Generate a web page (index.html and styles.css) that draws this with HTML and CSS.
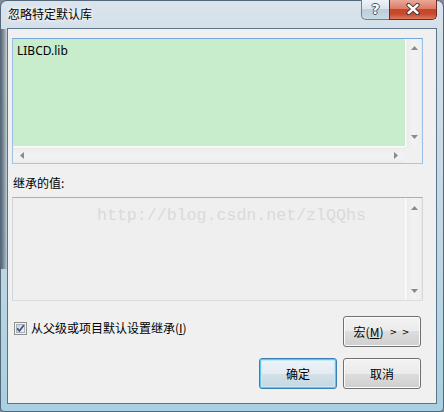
FILE: index.html
```html
<!DOCTYPE html>
<html lang="zh-CN">
<head>
<meta charset="utf-8">
<title>忽略特定默认库</title>
<link rel="stylesheet" href="styles.css">
</head>
<body>
<div class="window">
  <div class="titlebar">
    <span class="title">忽略特定默认库</span>
    <div class="caption-btns">
      <div class="cap-help">?</div>
      <div class="cap-close">
        <svg width="14" height="12" viewBox="0 0 14 12">
          <path d="M2.5 2 L11.5 10 M11.5 2 L2.5 10" stroke="#3a2a2a" stroke-width="4.2" stroke-linecap="round"/>
          <path d="M2.5 2 L11.5 10 M11.5 2 L2.5 10" stroke="#ffffff" stroke-width="2.4" stroke-linecap="round"/>
        </svg>
      </div>
    </div>
  </div>
  <div class="client">
    <div class="listbox focused">
      <div class="lb-content green">LIBCD.lib</div>
      <div class="vscroll">
        <svg class="arr" width="7" height="4" viewBox="0 0 7 4"><path d="M3.5 0 L7 4 L0 4Z"/></svg>
        <svg class="arr" width="7" height="4" viewBox="0 0 7 4"><path d="M0 0 L7 0 L3.5 4Z"/></svg>
      </div>
      <div class="hscroll">
        <svg class="arr" width="4" height="7" viewBox="0 0 4 7"><path d="M0 3.5 L4 0 L4 7Z"/></svg>
        <svg class="arr" width="4" height="7" viewBox="0 0 4 7"><path d="M0 0 L4 3.5 L0 7Z"/></svg>
      </div>
      <div class="corner"></div>
    </div>
    <div class="label">继承的值:</div>
    <div class="listbox disabled">
      <div class="lb-content"><span class="watermark">http://blog.csdn.net/zlQQhs</span></div>
      <div class="vscroll v2">
        <svg class="arr" width="7" height="4" viewBox="0 0 7 4"><path d="M3.5 0 L7 4 L0 4Z"/></svg>
        <svg class="arr" width="7" height="4" viewBox="0 0 7 4"><path d="M0 0 L7 0 L3.5 4Z"/></svg>
      </div>
    </div>
    <div class="row1">
      <label class="check">
        <svg width="13" height="13" viewBox="0 0 13 13">
          <defs>
            <linearGradient id="cg" x1="0" y1="0" x2="1" y2="1">
              <stop offset="0" stop-color="#c9ced6"/>
              <stop offset="1" stop-color="#f4f5f7"/>
            </linearGradient>
          </defs>
          <rect x="0.5" y="0.5" width="12" height="12" fill="#f4f4f4" stroke="#8e8f8f"/>
          <rect x="2.5" y="2.5" width="8" height="8" fill="url(#cg)" stroke="#a9afb7"/>
          <path d="M3.2 6.4 L5.4 9 L9.8 3.2" fill="none" stroke="#3a4f8c" stroke-width="1.7"/>
        </svg>
        <span>从父级或项目默认设置继承(<u>I</u>)</span>
      </label>
      <button class="btn">宏(<u>M</u>)<span class="chev">&gt; &gt;</span></button>
    </div>
    <div class="row2">
      <button class="btn default">确定</button>
      <button class="btn">取消</button>
    </div>
  </div>
</div>
</body>
</html>
```
FILE: styles.css
```css
* { box-sizing: border-box; }
html, body { margin: 0; padding: 0; }
body {
  width: 444px;
  height: 412px;
  overflow: hidden;
  background: #7f8b96;
  font-family: "Noto Sans", "Noto Sans CJK SC", sans-serif;
  font-size: 12px;
  color: #000;
}
.window {
  width: 444px;
  height: 412px;
  display: flex;
  flex-direction: column;
  border: 1px solid #53687a;
  border-radius: 7px 7px 4px 4px;
  background:
    linear-gradient(90deg, rgba(55,65,75,0.75) 0, rgba(55,65,75,0.45) 3px, rgba(55,65,75,0.08) 6px) 0 28px / 6px 240px no-repeat,
    linear-gradient(180deg, #dbe4ec 0, #d4dfe8 30px, #c4d8e4 220px, #a8d0e0 100%);
}
.titlebar {
  height: 27px;
  display: flex;
  align-items: flex-start;
  padding-left: 7px;
}
.title {
  margin-top: 5px;
  line-height: 16px;
  font-family: "Noto Sans CJK SC", sans-serif;
  text-shadow: 0 0 6px #fff, 0 0 3px #fff;
}
.caption-btns {
  margin-left: auto;
  margin-right: 6px;
  margin-top: -1px;
  display: flex;
  height: 20px;
}
.cap-help {
  width: 28px;
  height: 20px;
  border: 1px solid #6f8090;
  border-top: none;
  border-right: none;
  border-radius: 0 0 0 5px;
  background: linear-gradient(180deg, #eef3f7 0%, #dae4ec 45%, #bccddb 50%, #c9dae6 100%);
  color: #fff;
  font-family: "DejaVu Sans", sans-serif;
  font-weight: bold;
  font-size: 14px;
  line-height: 18px;
  text-align: center;
  text-shadow: -1px 0 #4a5663, 1px 0 #4a5663, 0 -1px #4a5663, 0 1px #4a5663;
}
.cap-close {
  width: 48px;
  height: 20px;
  border: 1px solid #6b2c24;
  border-top: none;
  border-radius: 0 0 5px 0;
  background: linear-gradient(180deg, #e9a899 0%, #dc7c68 45%, #c7452b 50%, #c94a2f 75%, #e07c5d 100%);
  display: flex;
  align-items: center;
  justify-content: center;
  padding-bottom: 1px;
}
.client {
  flex: 1;
  margin: 0 6px 7px 6px;
  border: 1px solid #58748b;
  background: #f0f0f0;
  display: flex;
  flex-direction: column;
  padding: 0 13px 0 4px;
}
.listbox {
  border: 1px solid #abadb3;
  display: grid;
  grid-template-columns: 1fr 17px;
}
.listbox.focused {
  margin-top: 9px;
  height: 126px;
  grid-template-rows: 1fr 17px;
  border-color: #76a7da #9cc1e6 #a9c8e8 #9ebfe2;
}
.listbox.disabled {
  margin-top: 6px;
  height: 104px;
  grid-template-rows: 1fr;
  border-color: #abadb3 #d6d7db #dadce0 #d0d3d8;
  background: #efefef;
}
.lb-content {
  padding: 4px 4px 0 4px;
  line-height: 16px;
}
.lb-content.green { background: #c7edcc; }
.watermark {
  display: block;
  padding: 4px 0 0 80px;
  font-family: "Liberation Mono", monospace;
  font-size: 16.6px;
  line-height: 20px;
  color: #dadada;
}
.vscroll {
  display: flex;
  flex-direction: column;
  justify-content: space-between;
  align-items: center;
  padding: 7px 0 7px 1px;
  background: linear-gradient(90deg, #fbfbfb 0, #fbfbfb 1px, #ececec 2px, #f2f2f2 50%, #efefef calc(100% - 1px), #e4e4e4 100%);
}
.vscroll.v2 { padding: 8px 0 7px 1px; }
.hscroll {
  display: flex;
  justify-content: space-between;
  align-items: center;
  padding: 1px 7px 0 7px;
  background: linear-gradient(180deg, #fbfbfb 0, #fbfbfb 1px, #ececec 2px, #f2f2f2 50%, #efefef calc(100% - 1px), #e4e4e4 100%);
}
.corner { background: #f0f0f0; }
.arr { display: block; fill: #8a8a8a; }
.label {
  margin-top: 11px;
  padding-left: 1px;
  line-height: 16px;
  font-family: "Noto Sans CJK SC", sans-serif;
}
.row1 {
  margin-top: 15px;
  display: flex;
  justify-content: space-between;
  align-items: flex-start;
}
.check {
  display: flex;
  align-items: center;
  gap: 4px;
  margin-left: 2px;
  margin-top: 4px;
  line-height: 16px;
  font-family: "Noto Sans CJK SC", sans-serif;
}
.check svg { display: block; }
.row2 {
  margin-top: 11px;
  display: flex;
  justify-content: flex-end;
  gap: 6px;
}
.btn {
  width: 78px;
  height: 31px;
  margin: 0 2px 0 0;
  padding: 0;
  border: 1px solid #707070;
  border-radius: 3px;
  background: linear-gradient(180deg, #f2f2f2 0%, #ebebeb 50%, #dddddd 50%, #cfcfcf 100%);
  box-shadow: inset 0 0 0 1px #fbfbfb;
  font-family: "Noto Sans CJK SC", sans-serif;
  font-size: 12px;
  color: #000;
  display: flex;
  align-items: center;
  justify-content: center;
}
.row2 .btn { margin-right: 0; }
.row2 .btn:last-child { margin-right: 2px; }
.btn.default {
  border-color: #3c7fb1;
  box-shadow: inset 0 0 0 1px #5ec6f2, inset 0 0 0 2px #c6e8f8;
  background: linear-gradient(180deg, #eef4f8 0%, #e4ecf1 50%, #d3e0e8 50%, #c6d8e3 100%);
}
.chev {
  font-family: "DejaVu Sans", sans-serif;
  font-size: 9px;
  margin-left: 6px;
  letter-spacing: 1px;
}
```
